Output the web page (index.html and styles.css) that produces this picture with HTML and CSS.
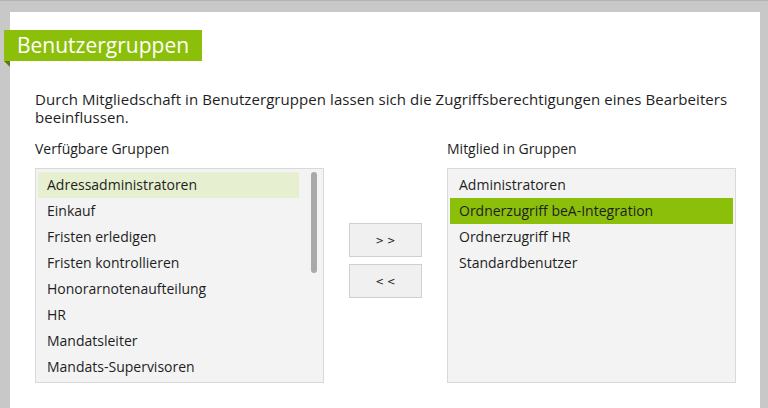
FILE: index.html
```html
<!DOCTYPE html>
<html lang="de">
<head>
    <meta charset="UTF-8">
    <title>Benutzergruppen</title>
    <link rel="stylesheet" href="styles.css">
</head>
<body>
    <div class="panel">
        <div class="title-bar">
            <h1>Benutzergruppen</h1>
        </div>

        <p class="intro">Durch Mitgliedschaft in Benutzergruppen lassen sich die Zugriffsberechtigungen eines Bearbeiters beeinflussen.</p>

        <div class="groups">
            <div class="column">
                <div class="column-label">Verfügbare Gruppen</div>
                <div class="listbox">
                    <ul class="items">
                        <li class="hover">Adressadministratoren</li>
                        <li>Einkauf</li>
                        <li>Fristen erledigen</li>
                        <li>Fristen kontrollieren</li>
                        <li>Honorarnotenaufteilung</li>
                        <li>HR</li>
                        <li>Mandatsleiter</li>
                        <li>Mandats-Supervisoren</li>
                    </ul>
                    <div class="scroll-thumb"></div>
                </div>
            </div>

            <div class="actions">
                <button>&gt; &gt;</button>
                <button>&lt; &lt;</button>
            </div>

            <div class="column">
                <div class="column-label">Mitglied in Gruppen</div>
                <div class="listbox">
                    <ul class="items">
                        <li>Administratoren</li>
                        <li class="selected">Ordnerzugriff beA-Integration</li>
                        <li>Ordnerzugriff HR</li>
                        <li>Standardbenutzer</li>
                    </ul>
                </div>
            </div>
        </div>
    </div>
</body>
</html>
```

FILE: styles.css
```css
html, body {
    margin: 0;
    height: 100%;
}

body {
    font-family: "Open Sans", "Noto Sans", sans-serif;
    font-size: 14px;
    color: #1e1e1e;
    background: #c8c8c8;
    border-top: 1px solid #b4b4b4;
    box-sizing: border-box;
    padding: 11px 8px 0 10px;
    overflow: hidden;
}

.panel {
    background: #ffffff;
    height: 100%;
    padding-top: 18px;
    box-sizing: border-box;
}

.title-bar {
    position: relative;
    display: inline-block;
    margin-left: -6px;
    background: #8cbf0a;
    height: 31px;
    padding: 0 13px 0 13px;
}

.title-bar::after {
    content: "";
    position: absolute;
    left: 0;
    bottom: -6px;
    border-top: 6px solid #5b7a0c;
    border-left: 6px solid transparent;
}

.title-bar h1 {
    margin: 0;
    font-size: 21px;
    font-weight: normal;
    color: #ffffff;
    line-height: 31px;
}

.intro {
    margin: 29px 30px 0 25px;
    font-size: 15px;
    line-height: 18px;
    letter-spacing: 0.07px;
}

.groups {
    display: flex;
    margin: 14px 0 0 25px;
}

.column-label {
    line-height: 18px;
    margin-bottom: 10px;
}

.listbox {
    position: relative;
    width: 287px;
    height: 213px;
    background: #f3f3f3;
    border: 1px solid #d9d9d9;
}

.items {
    list-style: none;
    margin: 0;
    padding: 3px 0 0 2px;
}

.items li {
    height: 26px;
    line-height: 26px;
    padding-left: 9px;
    margin-right: 2px;
    white-space: nowrap;
}

.items li.hover {
    background: #e6efcf;
    margin-right: 24px;
}

.items li.selected {
    background: #8cbf0a;
}

.scroll-thumb {
    position: absolute;
    top: 3px;
    right: 6px;
    width: 6px;
    height: 101px;
    border-radius: 3px;
    background: #a9a9a9;
}

.actions {
    display: flex;
    flex-direction: column;
    gap: 7px;
    margin: 83px 25px 0 25px;
}

.actions button {
    width: 73px;
    height: 34px;
    background: #f0f0f0;
    border: 1px solid #cfcfcf;
    font-family: "DejaVu Sans", sans-serif;
    font-size: 10px;
    color: #222222;
    padding: 0;
}
```
